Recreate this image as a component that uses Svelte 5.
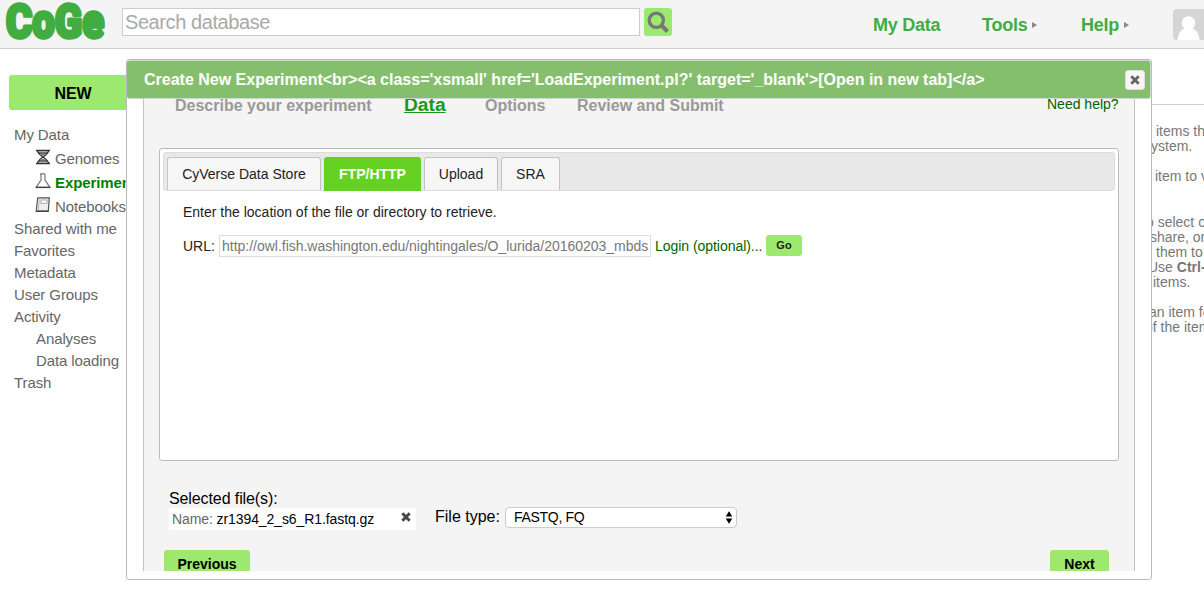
<script>
  const nav = [
    { label: 'My Data' },
    { label: 'Genomes', icon: 'dna' },
    { label: 'Experiments', icon: 'flask', active: true },
    { label: 'Notebooks', icon: 'book' },
    { label: 'Shared with me' },
    { label: 'Favorites' },
    { label: 'Metadata' },
    { label: 'User Groups' },
    { label: 'Activity' },
    { label: 'Analyses', sub: true },
    { label: 'Data loading', sub: true },
    { label: 'Trash' }
  ];
  const hints = [
    { text: 'items that', shift: 4 },
    { text: 'ystem.', shift: -1 },
    { text: '' },
    { text: 'item to view', shift: 3 },
    { text: '' },
    { text: '' },
    { text: 'o select one', shift: -6 },
    { text: 'share, organize', shift: -2 },
    { text: 'them to', shift: 4 },
    { text: 'Use ', bold: 'Ctrl-click', shift: -4 },
    { text: 'items.', shift: 1 },
    { text: '' },
    { text: 'an item for', shift: -3 },
    { text: 'of the item', shift: -7 }
  ];
  const title = "Create New Experiment<br><a class='xsmall' href='LoadExperiment.pl?' target='_blank'>[Open in new tab]</a>";
</script>

{#snippet cross(color)}
  <svg class="cross" width="10" height="10" viewBox="0 0 10 10"><path d="M1.3 1.3 8.7 8.7M8.7 1.3 1.3 8.7" stroke={color} stroke-width="2.9" /></svg>
{/snippet}

<div class="page">
  <header>
    <svg class="logo" width="108" height="48" viewBox="0 0 108 48"><text x="6" y="37.6" textLength="98" lengthAdjust="spacingAndGlyphs">CoGe</text></svg>
    <div class="search">Search database</div>
    <div class="find">
      <svg width="28" height="28" viewBox="0 0 28 28"><circle cx="12.3" cy="12.3" r="7.1" fill="none" stroke="#777" stroke-width="3.3" /><path d="m17.5 17.5 6 6" stroke="#777" stroke-width="4" /></svg>
    </div>
    <nav>
      <span class="n1">My Data</span>
      <span class="n2">Tools<i></i></span>
      <span class="n3">Help<i></i></span>
    </nav>
    <svg class="avatar" width="31" height="31" viewBox="0 0 31 31"><rect width="36" height="31" rx="4" fill="#d5d5d5" /><circle cx="15.5" cy="14" r="6.8" fill="#fff" /><path d="M4.5 31c.7-7 4-11 8-12h6c4 1 7.3 5 8 12z" fill="#fff" /></svg>
  </header>

  <main>
    <aside>
      <div class="new">NEW</div>
      {#each nav as item}
        <div class="item" class:icon={item.icon} class:sub={item.sub} class:active={item.active}>
          {#if item.icon === 'dna'}
            <svg width="16" height="16" viewBox="0 0 16 16"><path d="M1 1.5h14M1 14.5h14M4 4h8M4 12h8" stroke="#333" stroke-width="1.3" /><path d="M2.5 1.5c0 5 11 8 11 13M13.5 1.5c0 5-11 8-11 13" fill="none" stroke="#333" stroke-width="1.5" /><path d="M4 3h8M5 5.5h6M5 10.5h6M4 13h8" stroke="#888" /></svg>
          {:else if item.icon === 'flask'}
            <svg width="16" height="16" viewBox="0 0 16 16"><path d="M5 .8h5M6 1v6L1 14.3h14L10 7V1" fill="#fff" stroke="#777" stroke-width="1.2" /><path d="M1 14.4h14" stroke="#444" stroke-width="1.4" /></svg>
          {:else if item.icon === 'book'}
            <svg width="16" height="16" viewBox="0 0 16 16"><path d="M2.7.8h11.6l-1 13.5H1.2z" fill="#eee" stroke="#555" stroke-width="1.2" /><path d="M4.3 1.4 3.4 13.6" stroke="#bbb" /><path d="M6.2 3h6l-.3 3.4h-6z" fill="#fff" stroke="#999" stroke-width=".8" /><path d="M1.2 14.2h12" stroke="#444" stroke-width="1.5" /></svg>
          {/if}
          <span>{item.label}</span>
        </div>
      {/each}
    </aside>
    <section class="hints">
      {#each hints as h}
        <p style:margin-left="{h.shift ?? 0}px">{h.text}{#if h.bold}<b>{h.bold}</b>{/if}</p>
      {/each}
    </section>
  </main>

  <div class="dialog">
    <div class="bar">
      <span class="title">{title}</span>
      <span class="close">{@render cross('#666')}</span>
    </div>
    <div class="panel">
      <div class="steps">
        <span class="s1">Describe your experiment</span>
        <span class="s2">Data</span>
        <span class="s3">Options</span>
        <span class="s4">Review and Submit</span>
        <span class="need">Need help?</span>
      </div>
      <div class="box">
        <div class="tabs">
          <div class="tab t1">CyVerse Data Store</div>
          <div class="tab t2 on">FTP/HTTP</div>
          <div class="tab t3">Upload</div>
          <div class="tab t4">SRA</div>
        </div>
        <p class="intro">Enter the location of the file or directory to retrieve.</p>
        <div class="url">
          <span class="lab">URL:</span>
          <div class="field">http://owl.fish.washington.edu/nightingales/O_lurida/20160203_mbds</div>
          <span class="login">Login (optional)...</span>
          <div class="go">Go</div>
        </div>
      </div>
      <div class="files">
        <div class="selected">
          <div class="head">Selected file(s):</div>
          <div class="file"><span><em>Name:</em> zr1394_2_s6_R1.fastq.gz</span>{@render cross('#444')}</div>
        </div>
        <span class="type">File type:</span>
        <div class="select">
          <span>FASTQ, FQ</span>
          <svg width="8" height="13" viewBox="0 0 8 13"><path d="M4 .3 7.3 5.5H.7zM4 12.7 7.3 7.5H.7z" /></svg>
        </div>
      </div>
      <div class="buttons"><div class="prev">Previous</div><div class="next">Next</div></div>
    </div>
  </div>
</div>

<style>
  :global(body) { background: #fff; }
  * { box-sizing: border-box; }
  p { margin: 0; }
  .page { position: relative; width: 1204px; height: 594px; overflow: hidden; font-family: "Liberation Sans", Arial, sans-serif; color: #666; white-space: nowrap; }
  header { display: flex; height: 49px; background: #f4f4f4; border-bottom: 1px solid #ccc; }
  .logo { flex: none; width: 108px; }
  .logo text { font: 900 49px Roboto, sans-serif; fill: #41ad41; stroke: #41ad41; stroke-width: 3.6px; stroke-linejoin: round; }
  .search { width: 518px; height: 28px; margin: 8px 4px 0 14px; padding-left: 2px; border: 1px solid #ccc; background: #fff; color: #a9a9a9; font-size: 20px; letter-spacing: -.42px; line-height: 27px; }
  .find { width: 28px; height: 28px; margin-top: 8px; background: #9de86e; border-radius: 3px; }
  .find svg { display: block; }
  nav { display: flex; margin-left: 201px; width: 300px; padding-top: 14px; line-height: 22px; color: #41ad41; font-size: 18px; font-weight: bold; letter-spacing: -.25px; }
  nav .n1 { width: 109px; }
  nav .n2 { width: 99px; }
  nav i { display: inline-block; margin: 0 0 3px 5px; border-left: 5px solid #888; border-top: 3.5px solid transparent; border-bottom: 3.5px solid transparent; }
  .avatar { flex: none; margin-top: 9px; }
  main { display: flex; justify-content: space-between; }
  aside { width: 140px; padding: 26px 0 0 9px; font-size: 15px; letter-spacing: -.1px; }
  .new { width: 128px; height: 35px; margin-bottom: 14px; border-radius: 3px; background: #9de86e; color: #000; font-size: 16px; font-weight: bold; line-height: 37px; text-align: center; }
  .item { display: flex; height: 22px; padding-left: 5px; line-height: 22px; }
  .item.icon { height: 24px; padding-left: 26px; line-height: 26px; }
  .item.icon svg { margin: 3px 4px 0 0; flex: none; }
  .item.sub { padding-left: 27px; }
  .item.active { color: #008000; font-weight: bold; }
  .hints { width: 52px; margin-top: 55px; padding-top: 19px; border-top: 1px solid #ccc; font-size: 14px; line-height: 15.1px; color: #777; }
  .hints p { height: 15.1px; }
  .dialog { position: absolute; left: 126px; top: 59px; width: 1026px; height: 521px; border: 1px solid #bbb; border-radius: 3px; background: #fff; }
  .bar { display: flex; justify-content: space-between; align-items: center; height: 39px; padding: 1px 5px 0 17px; border: 1px solid #d4d4d4; border-left: 0; border-radius: 3px; background: #85bf6e; }
  .title { color: #fff; font-size: 16px; font-weight: bold; }
  .close { display: grid; place-items: center; width: 20px; height: 20px; border: 1px solid #ddd; border-radius: 3px; background: #f6f6f6; }
  .panel { width: 992px; height: 472px; margin-left: 16px; overflow: hidden; border: solid #c4c4c4; border-width: 0 1px; background: #f4f4f4; color: #000; }
  .steps { display: flex; align-items: baseline; height: 50px; padding-left: 31px; line-height: 22px; margin-top: -5px; color: #999; font-size: 16px; font-weight: bold; }
  .s1 { width: 229px; }
  .s2 { width: 81px; color: #1a9a1a; font-size: 19.2px; text-decoration: underline; }
  .s3 { width: 92px; }
  .s4 { width: 470px; }
  .need { align-self: flex-start; margin-top: -1px; color: #006400; font-size: 14px; font-weight: normal; }
  .box { width: 960px; height: 313px; margin: 4px 0 0 15px; padding: 3px; border: 1px solid #bbb; border-radius: 3px; background: #fff; font-size: 14px; color: #222; }
  .tabs { display: flex; gap: 3px; height: 39px; padding: 4px 0 0 3px; border: 1px solid #ddd; border-radius: 3px; background: #e8e8e8; }
  .tab { height: 33px; border: 1px solid #c4c4c4; border-bottom: 0; border-radius: 3px 3px 0 0; background: #f6f6f6; line-height: 33px; text-align: center; }
  .t1 { width: 154px; }
  .t2 { width: 97px; }
  .t3 { width: 74px; }
  .t4 { width: 59px; }
  .tab.on { height: 34px; border: 0; background: #65d223; color: #fff; font-weight: bold; line-height: 35px; }
  .intro { margin: 12px 0 0 20px; line-height: 18px; }
  .url { display: flex; margin: 14px 0 0 20px; line-height: 22px; }
  .lab { width: 36px; }
  .field { width: 432px; height: 22px; padding-left: 2px; border: 1px solid #ddd; color: #777; letter-spacing: -.015px; line-height: 20px; overflow: hidden; }
  .login { width: 111px; margin-left: 4px; color: #006400; letter-spacing: -.04px; }
  .go { width: 36px; height: 21px; border-radius: 3px; background: #9de86e; font-size: 11px; font-weight: bold; line-height: 21px; text-align: center; }
  .files { display: flex; height: 89px; padding: 28px 0 0 25px; font-size: 16px; }
  .selected { width: 247px; }
  .head { height: 19px; letter-spacing: -.1px; line-height: 20px; }
  .file { display: flex; justify-content: space-between; height: 22px; padding: 0 5px 0 3px; background: #fff; font-size: 14px; letter-spacing: -.09px; line-height: 23px; }
  .file .cross { margin-top: 4px; }
  em { color: #666; font-style: normal; }
  .type { width: 70px; margin: 18px 0 0 19px; line-height: 20px; }
  .select { display: flex; justify-content: space-between; width: 232px; height: 21px; margin-top: 18px; padding: 0 3px 0 8px; border: 1px solid #ccc; border-radius: 4px; background: #fff; font-size: 14px; letter-spacing: -.3px; line-height: 19px; }
  .select svg { margin-top: 3px; }
  .buttons { display: flex; justify-content: space-between; padding: 0 25px 0 20px; font-size: 14px; font-weight: bold; line-height: 28px; text-align: center; }
  .prev, .next { height: 30px; border-radius: 3px; background: #9de86e; }
  .prev { width: 86px; }
  .next { width: 59px; }
</style>
